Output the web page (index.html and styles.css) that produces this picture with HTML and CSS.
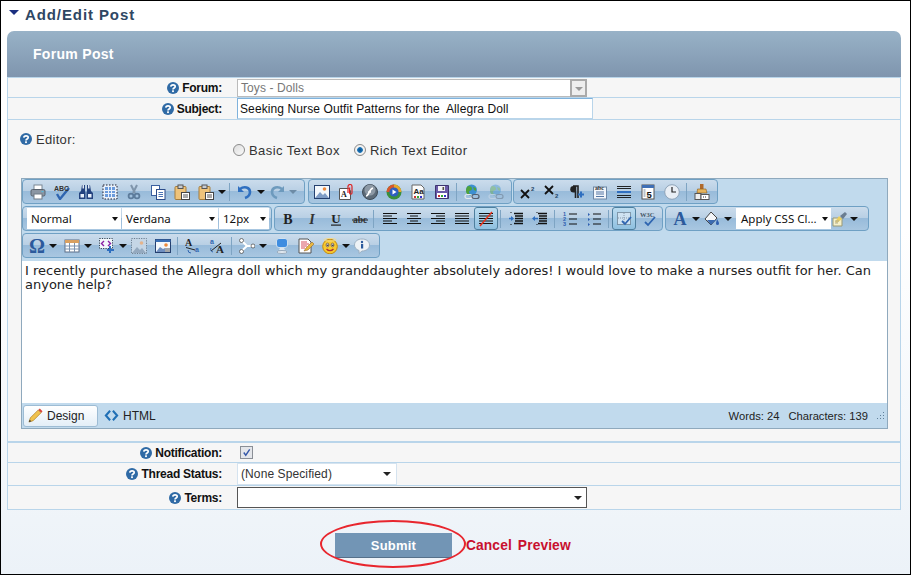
FILE: index.html
```html
<!DOCTYPE html>
<html lang="en">
<head>
    <meta charset="utf-8">
    <title>Add/Edit Post</title>
    <link rel="stylesheet" href="styles.css">
</head>
<body>
    <svg class="icon-defs" xmlns="http://www.w3.org/2000/svg">
        <symbol id="help" viewBox="0 0 12 12"><circle cx="6" cy="6" r="6" fill="#2f6aa5"/><path d="M3.800 4.600C4 2.400 8.200 2.400 8.200 4.500 8.200 6 6 5.900 6 7.400" fill="none" stroke="#fff" stroke-width="1.700"/><rect x="5.100" y="8.300" width="1.800" height="1.800" fill="#fff"/></symbol>
        <symbol id="print" viewBox="0 0 16 16"><rect x="4" y="1" width="8" height="5" fill="#fff" stroke="#7b8794"/><rect x="1" y="5.500" width="14" height="6.500" rx="1.500" fill="#8b96a3" stroke="#59636e"/><rect x="4" y="10" width="8" height="5" fill="#fff" stroke="#6f7a86"/><rect x="11.500" y="7" width="2" height="1.200" fill="#5bd"/></symbol>
        <symbol id="spell" viewBox="0 0 16 16"><path d="M3 10l3 5 9-11" fill="none" stroke="#2f65b0" stroke-width="2.400"/></symbol>
        <symbol id="find" viewBox="0 0 16 16"><path d="M4 1h3v6l.5 1.500V15H1V9l2-2zM9 1h3l1 6 2 2v6H8.500V8.500L9 7z" fill="#24437f"/><rect x="2.500" y="10" width="3.500" height="3.500" fill="#e8f0fa"/><rect x="10" y="10" width="3.500" height="3.500" fill="#e8f0fa"/><rect x="4.500" y="1" width="1.500" height="3.500" fill="#dfe8f4"/><rect x="10" y="1" width="1.500" height="3.500" fill="#dfe8f4"/></symbol>
        <symbol id="selall" viewBox="0 0 16 16"><rect x="1" y="1" width="14" height="14" fill="#e9f1fb" stroke="#223" stroke-dasharray="1.500 1.500"/><rect x="3" y="3" width="10" height="10" fill="#6b9bdc"/><path d="M3 6.500h10M3 9.500h10M6.500 3v10M9.500 3v10" stroke="#e8f1fc" stroke-width="1"/></symbol>
        <symbol id="cut" viewBox="0 0 16 16"><path d="M5 1l4 8M11 1L7 9" stroke="#7f95ab" stroke-width="2" fill="none"/><circle cx="5" cy="12" r="2.400" fill="none" stroke="#5d7c9c" stroke-width="1.800"/><circle cx="11" cy="12" r="2.400" fill="none" stroke="#5d7c9c" stroke-width="1.800"/></symbol>
        <symbol id="copy" viewBox="0 0 16 16"><rect x="1.500" y="1.500" width="8" height="10" fill="#fff" stroke="#3a5fa0"/><rect x="6.500" y="5.500" width="8.500" height="10" fill="#fff" stroke="#2c4c8a"/><path d="M8.500 8.500h4.500M8.500 10.500h4.500M8.500 12.500h4.500" stroke="#4a73b5"/></symbol>
        <symbol id="paste" viewBox="0 0 16 16"><rect x="1" y="2.500" width="11" height="13" rx="1" fill="#eec37b" stroke="#a57c3c"/><rect x="4" y="1" width="5" height="3.500" fill="#c8ccd2" stroke="#555"/><rect x="7.500" y="8.500" width="8" height="7" fill="#fff" stroke="#444"/><path d="M9 11h5M9 13h5" stroke="#555"/></symbol>
        <symbol id="undo" viewBox="0 0 16 16"><path d="M3 5c4-3 10-2 10 3 0 3-2 5-5 6" fill="none" stroke="#2f6fc0" stroke-width="2.600"/><path d="M1 2v6h6z" fill="#2f6fc0"/></symbol>
        <symbol id="redo" viewBox="0 0 16 16"><path d="M13 5C9 2 3 3 3 8c0 3 2 5 5 6" fill="none" stroke="#6d9abd" stroke-width="2.600"/><path d="M15 2v6H9z" fill="#6d9abd"/></symbol>
        <symbol id="image" viewBox="0 0 16 16"><rect x=".5" y="1.500" width="15" height="13" fill="#f4f8fc" stroke="#25406f"/><circle cx="10.500" cy="5" r="1.800" fill="#ee8a3c"/><path d="M1 14l5-6 3 3 2-2 4 5z" fill="#7e9cc6"/></symbol>
        <symbol id="attach" viewBox="0 0 16 16"><path d="M1.500 4.500h9l2 2v9h-11z" fill="#fff" stroke="#555"/><path d="M10 9V2.500a2 2 0 0 1 4 0V9a1.200 1.200 0 0 1-2.400 0V3.500" fill="none" stroke="#d22" stroke-width="1.200"/></symbol>
        <symbol id="flash" viewBox="0 0 16 16"><circle cx="8" cy="8" r="7.500" fill="#5d6b78" stroke="#3f4b57"/><circle cx="8" cy="6" r="5.500" fill="#8d99a5"/><path d="M4 12c3 0 3-7 7-8M6 8h3" fill="none" stroke="#fff" stroke-width="1.600"/></symbol>
        <symbol id="media" viewBox="0 0 16 16"><circle cx="8" cy="8" r="7.500" fill="#3a8f3c"/><path d="M8 .5A7.500 7.500 0 0 1 15.500 8H12A4 4 0 0 0 8 4z" fill="#e6a72c"/><path d="M.5 8A7.500 7.500 0 0 1 8 .5V4A4 4 0 0 0 4 8z" fill="#d8562c"/><circle cx="8" cy="8" r="4.600" fill="#2f5fc0"/><path d="M6.500 5.500v5l4-2.500z" fill="#fff"/></symbol>
        <symbol id="template" viewBox="0 0 16 16"><path d="M2 1h9l3 3v11H2z" fill="#fbfbfb" stroke="#666"/><rect x="4" y="12" width="2" height="2" fill="#c33"/><rect x="7" y="12" width="2" height="2" fill="#3a3"/><rect x="10" y="12" width="2" height="2" fill="#33c"/></symbol>
        <symbol id="save" viewBox="0 0 16 16"><path d="M1.500 1.500h13v13h-13z" fill="#6a5aa8" stroke="#3d3470"/><rect x="4" y="2" width="7" height="5" fill="#f3f3f8"/><rect x="8.500" y="3" width="1.600" height="3" fill="#554"/><rect x="3" y="9" width="10" height="5" fill="#fff"/><rect x="4" y="11" width="2" height="2" fill="#c33"/><rect x="7" y="11" width="2" height="2" fill="#3a3"/><rect x="10" y="11" width="2" height="2" fill="#33c"/></symbol>
        <symbol id="link" viewBox="0 0 16 16"><circle cx="7.500" cy="6" r="5.500" fill="#3d8fd0"/><path d="M4 2c3 0 4 1 4 3s-3 1-3 3 2 2 3 3c-3 1-6-1-6-4s1-4 2-5zM9 3l3 1 0 3-2-1z" fill="#4fa33c"/><rect x="1" y="10.500" width="7" height="4" rx="2" fill="none" stroke="#e4e8ee" stroke-width="1.200"/><rect x="8" y="10.500" width="7" height="4" rx="2" fill="none" stroke="#555f6e" stroke-width="1.200"/></symbol>
        <symbol id="sup" viewBox="0 0 16 16"><path d="M1 6l8 8M9 6l-8 8" stroke="#111" stroke-width="1.800"/></symbol>
        <symbol id="sub" viewBox="0 0 16 16"><path d="M1 2l8 8M9 2l-8 8" stroke="#111" stroke-width="1.800"/></symbol>
        <symbol id="para" viewBox="0 0 16 16"><path d="M5 2h5v12M7.500 2v12" fill="none" stroke="#222" stroke-width="1.600"/><path d="M5.500 2a3 3 0 0 0 0 6.500h2V2z" fill="#222"/><path d="M10 10.500h6M13 7.500v6" stroke="#2f6fc0" stroke-width="2"/></symbol>
        <symbol id="abcnote" viewBox="0 0 16 16"><rect x="1.500" y="3" width="13" height="12" fill="#f2f6fb" stroke="#6d87a6"/><path d="M4 8h8M4 10h8M4 12.500h8" stroke="#5577a5"/></symbol>
        <symbol id="hr" viewBox="0 0 16 16"><path d="M1 2.500h14M1 4.500h14M1 11.500h14M1 13.500h14" stroke="#111" stroke-width=".9"/><rect x="1" y="7" width="14" height="2" fill="#2f6fc0"/></symbol>
        <symbol id="five" viewBox="0 0 16 16"><rect x="2" y="1" width="12" height="14" fill="#fff" stroke="#555"/><rect x="2" y="1" width="12" height="3" fill="#3f6fb5"/><path d="M3.500 6h2M3.500 8h2M3.500 10h2M3.500 12h2" stroke="#789"/></symbol>
        <symbol id="clock" viewBox="0 0 16 16"><circle cx="8" cy="8" r="7.300" fill="#e8eef5" stroke="#8ea3b8"/><path d="M8 3v5h4" fill="none" stroke="#222" stroke-width="1.200"/></symbol>
        <symbol id="style" viewBox="0 0 16 16"><rect x="6" y="0" width="3.500" height="5" fill="#b06a2c"/><path d="M3.500 5h8.500l1 4H3z" fill="#e6b45c" stroke="#8a5a20" stroke-width=".6"/><rect x="1" y="9.500" width="6" height="6" fill="#eee" stroke="#555"/><rect x="7" y="10.500" width="8" height="5" fill="#fff" stroke="#555"/><path d="M9 13h4" stroke="#333" stroke-dasharray="1 1"/></symbol>
        <symbol id="al" viewBox="0 0 16 16"><path d="M1 2.500h14M1 5h9M1 7.500h14M1 10h9M1 12.500h14" stroke="#111" stroke-width="1.200"/></symbol>
        <symbol id="ac" viewBox="0 0 16 16"><path d="M1 2.500h14M4 5h8M1 7.500h14M4 10h8M1 12.500h14" stroke="#111" stroke-width="1.200"/></symbol>
        <symbol id="ar" viewBox="0 0 16 16"><path d="M1 2.500h14M6 5h9M1 7.500h14M6 10h9M1 12.500h14" stroke="#111" stroke-width="1.200"/></symbol>
        <symbol id="aj" viewBox="0 0 16 16"><path d="M1 2.500h14M1 5h14M1 7.500h14M1 10h14M1 12.500h14" stroke="#111" stroke-width="1.200"/></symbol>
        <symbol id="nocolor" viewBox="0 0 16 16"><path d="M1 2.500h14M1 5h14M1 7.500h14M1 10h14M1 12.500h14" stroke="#111" stroke-width="1.200"/><path d="M2 15L14 1" stroke="#e8331c" stroke-width="1.500"/></symbol>
        <symbol id="indent" viewBox="0 0 16 16"><path d="M6 2.500h9M7 5h8M7 7.500h8M7 10h8M6 12.500h9" stroke="#111" stroke-width="1.300"/><path d="M1 7.500h4" stroke="#2f6fc0" stroke-width="1.500"/><path d="M6 7.500L3 5v5z" fill="#2f6fc0"/><path d="M3 1v1M3 13v2" stroke="#111" stroke-dasharray="1 1"/></symbol>
        <symbol id="outdent" viewBox="0 0 16 16"><path d="M6 2.500h9M7 5h8M7 7.500h8M7 10h8M6 12.500h9" stroke="#111" stroke-width="1.300"/><path d="M2 7.500h4" stroke="#2f6fc0" stroke-width="1.500"/><path d="M0 7.500L3 5v5z" fill="#2f6fc0"/><path d="M5 1v1M5 13v2" stroke="#111" stroke-dasharray="1 1"/></symbol>
        <symbol id="ol" viewBox="0 0 16 16"><path d="M7 3h8M7 8h8M7 13h8" stroke="#111" stroke-width="1.200"/></symbol>
        <symbol id="ul" viewBox="0 0 16 16"><path d="M7 3h8M7 8h8M7 13h8" stroke="#111" stroke-width="1.200"/><path d="M2 2l2 1.500L2 5zM2 7l2 1.500L2 10zM2 12l2 1.500L2 15z" fill="#2f5fb0"/></symbol>
        <symbol id="guides" viewBox="0 0 16 16"><rect x="1.500" y="1.500" width="13" height="12" fill="#cfe3f2" stroke="#456" stroke-dasharray="1 1"/><path d="M8 2v11M2 7h12" stroke="#89a" stroke-dasharray="1 1"/><path d="M6 10l3 3 6-7" fill="none" stroke="#2f65b0" stroke-width="1.800"/></symbol>
        <symbol id="w3ccheck" viewBox="0 0 16 16"><path d="M5 11l3 3 7-8" fill="none" stroke="#2f65b0" stroke-width="1.800"/></symbol>
        <symbol id="bucket" viewBox="0 0 16 16"><path d="M7 1L1 8l6 6 6-7z" fill="#f4f6f9" stroke="#444"/><path d="M3 9h9l-5 5z" fill="#3c6bb0"/><path d="M13 8c1 2 2 3 2 4.500a1.500 1.500 0 0 1-3 0c0-1 .5-2 1-4.500z" fill="#2f5fb0"/></symbol>
        <symbol id="cleaner" viewBox="0 0 16 16"><path d="M1 7h9v8H1z" fill="#f6f0c8" stroke="#997"/><path d="M3 11l4-6 3 3-5 4z" fill="#ecd060"/><path d="M8 5l5-4 2 2-4 5z" fill="#6a7d91"/><path d="M3 10h4M3 12h3" stroke="#aa9"/></symbol>
        <symbol id="table" viewBox="0 0 16 16"><rect x="1" y="2" width="14" height="12" fill="#fff" stroke="#5c6f88"/><rect x="1" y="2" width="14" height="3" fill="#d9a060"/><path d="M1 8h14M1 11h14M5.500 5v9M10.500 5v9" stroke="#7c92ad"/></symbol>
        <symbol id="snippet" viewBox="0 0 16 16"><rect x=".5" y=".5" width="13" height="10" fill="#f4f8fc" stroke="#345" stroke-dasharray="1.200 1.200"/><path d="M5 3L2.500 5.500 5 8M9 3l2.500 2.500L9 8" fill="none" stroke="#8a1fa5" stroke-width="1.400"/><path d="M11 15v-7M8 12h7" stroke="#2f6fc0" stroke-width="2"/></symbol>
        <symbol id="imgmap" viewBox="0 0 16 16"><rect x=".5" y=".5" width="15" height="15" fill="#c5d6e6" stroke="#6b7e90" stroke-dasharray="1.200 1.200"/><circle cx="10.500" cy="5" r="1.800" fill="#e4b48c"/><path d="M1 15l5-6 3 3 2-2 4 5z" fill="#94a9bf"/></symbol>
        <symbol id="imgprop" viewBox="0 0 16 16"><rect x=".5" y="1.500" width="15" height="13" fill="#f4f8fc" stroke="#25406f"/><rect x=".5" y="1.500" width="15" height="2.500" fill="#3a6fb5"/><circle cx="11" cy="7" r="1.800" fill="#ee8a3c"/><path d="M1 14l4-5 3 2 2-1v4z" fill="#6f8fc0"/><path d="M10 11h5M10 13h5" stroke="#555"/></symbol>
        <symbol id="ltrmark" viewBox="0 0 16 16"><path d="M1 9.500L10 12" stroke="#222"/><path d="M3 12a3 3 0 0 0 3 3" fill="none" stroke="#2f65b0"/></symbol>
        <symbol id="rtlmark" viewBox="0 0 16 16"><path d="M2 13L12 5" stroke="#222"/><path d="M2 10a3 3 0 0 0 2 4" fill="none" stroke="#2f65b0"/></symbol>
        <symbol id="nodes" viewBox="0 0 16 16"><path d="M2.500 2.500L8 8l-6 5.500M8 8h6" stroke="#fff" stroke-width="2" fill="none"/><circle cx="2.500" cy="2.500" r="2" fill="#fff" stroke="#444" stroke-width=".7"/><circle cx="2.500" cy="13.500" r="2" fill="#fff" stroke="#444" stroke-width=".7"/><circle cx="14" cy="8" r="2" fill="#fff" stroke="#444" stroke-width=".7"/></symbol>
        <symbol id="monitor" viewBox="0 0 16 16"><rect x="2.500" y="0.500" width="11" height="9" rx="2.500" fill="#3f8de0" stroke="#cfe0ee"/><path d="M6 10h4l1 2H5z" fill="#dde6ee"/><ellipse cx="8" cy="14" rx="5" ry="1.500" fill="#e4ebf2" stroke="#9ab"/></symbol>
        <symbol id="edit" viewBox="0 0 16 16"><path d="M1 1h9l3 3v11H1z" fill="#fff" stroke="#555"/><path d="M3 4h6M3 6h8M3 8h6M3 10h4" stroke="#c23" stroke-width=".8"/><path d="M6 13l2-3 6-6 2 2-6 6z" fill="#e8b840" stroke="#8a5a20" stroke-width=".5"/></symbol>
        <symbol id="smile" viewBox="0 0 16 16"><circle cx="8" cy="8.500" r="7.300" fill="#f7c92e" stroke="#c38a12"/><ellipse cx="8" cy="1.800" rx="6" ry="1.300" fill="none" stroke="#f3d98a"/><ellipse cx="5.500" cy="7" rx="1.400" ry="1.800" fill="#fff" stroke="#765"/><ellipse cx="10.500" cy="7" rx="1.400" ry="1.800" fill="#fff" stroke="#765"/><circle cx="5.700" cy="7.300" r=".7" fill="#222"/><circle cx="10.700" cy="7.300" r=".7" fill="#222"/><path d="M4.500 11c2 2.200 5 2.200 7 0" fill="none" stroke="#a33" stroke-width="1.200"/></symbol>
        <symbol id="info" viewBox="0 0 16 16"><path d="M8 1c4 0 7.500 2.200 7.500 6S12 13 8 13l-3 2.500V12.500C2 11.500.500 9.500.500 7 .500 3.200 4 1 8 1z" fill="#eef2f6" stroke="#9db0c2"/><circle cx="8" cy="4" r="1.200" fill="#2c5a9c"/><rect x="7" y="6" width="2.200" height="4.500" fill="#2c5a9c"/></symbol>
        <symbol id="pencil" viewBox="0 0 16 16"><path d="M1 15l1.500-4.500L11 2l3 3-8.500 8.500z" fill="#f0c24e" stroke="#a9781f" stroke-width=".7"/><path d="M11 2l1.500-1.500 3 3L14 5z" fill="#d9483b"/><path d="M1 15l.8-2.600 1.800 1.800z" fill="#333"/></symbol>
        <symbol id="code" viewBox="0 0 16 16"><path d="M6.500 3L2 8l4.500 5M9.500 3L14 8l-4.500 5" fill="none" stroke="#1f6fb5" stroke-width="2.200"/></symbol>
        <symbol id="check" viewBox="0 0 12 12"><path d="M3 6l2.200 3L9.500 2.500" fill="none" stroke="#3457a8" stroke-width="1.500"/></symbol>
    </svg>

    <div class="page">
        <h1 class="page-title"><span class="caret"></span>Add/Edit Post</h1>

        <div class="panel">
            <h2 class="panel-title">Forum Post</h2>
            <div class="panel-body">
                <div class="row row-forum">
                    <label class="row-label"><svg class="help"><use href="#help"/></svg>Forum:</label>
                    <div class="picker picker-disabled">Toys - Dolls<span class="picker-btn"></span></div>
                </div>
                <div class="row row-subject">
                    <label class="row-label"><svg class="help"><use href="#help"/></svg>Subject:</label>
                    <div class="subject-box">Seeking Nurse Outfit Patterns for the  Allegra Doll</div>
                </div>

                <div class="editor-field">
                    <div class="editor-head">
                        <label class="editor-label"><svg class="help"><use href="#help"/></svg>Editor:</label>
                        <div class="editor-mode">
                            <span class="radio"></span><span class="radio-text">Basic Text Box</span>
                            <span class="radio radio-on"></span><span class="radio-text">Rich Text Editor</span>
                        </div>
                    </div>

                    <div class="editor">
                        <div class="toolbar">
                            <div class="tool-group group-a">
                                <svg class="ic"><use href="#print"/></svg>
                                <svg class="ic" viewBox="0 0 16 16"><use href="#spell"/><text class="g-sans" x="0" y="6.500" font-size="7" fill="#333">ABC</text></svg>
                                <svg class="ic"><use href="#find"/></svg>
                                <svg class="ic"><use href="#selall"/></svg>
                                <svg class="ic"><use href="#cut"/></svg>
                                <svg class="ic"><use href="#copy"/></svg>
                                <svg class="ic"><use href="#paste"/></svg>
                                <svg class="ic"><use href="#paste"/></svg>
                                <span class="drop"></span>
                                <span class="sep sep-wide"></span>
                                <svg class="ic"><use href="#undo"/></svg>
                                <span class="drop"></span>
                                <svg class="ic"><use href="#redo"/></svg>
                                <span class="drop drop-off"></span>
                            </div>
                            <div class="tool-group group-b">
                                <svg class="ic"><use href="#image"/></svg>
                                <svg class="ic" viewBox="0 0 16 16"><use href="#attach"/><text class="g-serif" x="3" y="13" font-size="8" fill="#222">A</text></svg>
                                <svg class="ic"><use href="#flash"/></svg>
                                <svg class="ic"><use href="#media"/></svg>
                                <svg class="ic" viewBox="0 0 16 16"><use href="#template"/><text class="g-sans" x="3.500" y="10" font-size="8" fill="#222">Aa</text></svg>
                                <svg class="ic"><use href="#save"/></svg>
                                <span class="sep"></span>
                                <svg class="ic"><use href="#link"/></svg>
                                <svg class="ic ic-off"><use href="#link"/></svg>
                            </div>
                            <div class="tool-group group-c">
                                <svg class="ic" viewBox="0 0 16 16"><use href="#sup"/><text class="g-sans" x="11" y="7" font-size="6" fill="#246">2</text></svg>
                                <svg class="ic" viewBox="0 0 16 16"><use href="#sub"/><text class="g-sans" x="11" y="14" font-size="6" fill="#246">2</text></svg>
                                <svg class="ic"><use href="#para"/></svg>
                                <svg class="ic" viewBox="0 0 16 16"><use href="#abcnote"/><text class="g-serif" x="3" y="5.500" font-size="6" fill="#333">abc</text></svg>
                                <svg class="ic"><use href="#hr"/></svg>
                                <svg class="ic" viewBox="0 0 16 16"><use href="#five"/><text class="g-sans" x="6.500" y="13.500" font-size="9.500" fill="#111">5</text></svg>
                                <svg class="ic"><use href="#clock"/></svg>
                                <span class="sep"></span>
                                <svg class="ic"><use href="#style"/></svg>
                            </div>
                        </div>

                        <div class="toolbar">
                            <div class="tool-group group-d">
                                <div class="combo combo-format">Normal</div>
                                <div class="combo combo-font">Verdana</div>
                                <div class="combo combo-size">12px</div>
                            </div>
                            <div class="tool-group group-e">
                                <svg class="ic" viewBox="0 0 16 16"><text class="g-serif" x="8" y="13" text-anchor="middle" font-size="14" fill="#222">B</text></svg>
                                <svg class="ic" viewBox="0 0 16 16"><text class="g-serif g-italic" x="8" y="13" text-anchor="middle" font-size="14" fill="#333">I</text></svg>
                                <svg class="ic" viewBox="0 0 16 16"><text class="g-serif" x="8" y="12" text-anchor="middle" font-size="13" fill="#222">U</text><rect x="3" y="13.500" width="10" height="1.200" fill="#222"/></svg>
                                <svg class="ic" viewBox="0 0 16 16"><text class="g-serif" x="8" y="12" text-anchor="middle" font-size="9.500" fill="#333">abc</text><rect x="0" y="8.500" width="16" height="1" fill="#222"/></svg>
                                <span class="sep sep-left"></span>
                                <svg class="ic"><use href="#al"/></svg>
                                <svg class="ic"><use href="#ac"/></svg>
                                <svg class="ic"><use href="#ar"/></svg>
                                <svg class="ic"><use href="#aj"/></svg>
                                <span class="on"><svg class="ic"><use href="#nocolor"/></svg></span>
                                <span class="sep"></span>
                                <svg class="ic"><use href="#indent"/></svg>
                                <svg class="ic"><use href="#outdent"/></svg>
                                <span class="sep"></span>
                                <svg class="ic" viewBox="0 0 16 16"><use href="#ol"/><text class="g-sans" x="1" y="5" font-size="5.500" fill="#2f5fb0">1</text><text class="g-sans" x="1" y="10" font-size="5.500" fill="#2f5fb0">2</text><text class="g-sans" x="1" y="15" font-size="5.500" fill="#2f5fb0">3</text></svg>
                                <svg class="ic"><use href="#ul"/></svg>
                                <span class="sep"></span>
                                <span class="on"><svg class="ic"><use href="#guides"/></svg></span>
                                <svg class="ic" viewBox="0 0 16 16"><use href="#w3ccheck"/><text class="g-serif" x="0" y="6" font-size="6.500" fill="#456">W3C</text></svg>
                            </div>
                            <div class="tool-group group-f">
                                <span class="letter-ic letter-a">A</span>
                                <span class="drop"></span>
                                <svg class="ic"><use href="#bucket"/></svg>
                                <span class="drop"></span>
                                <div class="combo combo-css">Apply CSS Cl...</div>
                                <svg class="ic ic-tight"><use href="#cleaner"/></svg>
                                <span class="drop"></span>
                            </div>
                        </div>

                        <div class="toolbar">
                            <div class="tool-group group-g">
                                <span class="letter-ic letter-omega">Ω</span>
                                <span class="drop drop-gap"></span>
                                <svg class="ic"><use href="#table"/></svg>
                                <span class="drop drop-gap"></span>
                                <svg class="ic"><use href="#snippet"/></svg>
                                <span class="drop"></span>
                                <svg class="ic"><use href="#imgmap"/></svg>
                                <svg class="ic"><use href="#imgprop"/></svg>
                                <span class="sep"></span>
                                <svg class="ic" viewBox="0 0 16 16"><use href="#ltrmark"/><text class="g-serif" x="0" y="8" font-size="10" fill="#222">A</text><text class="g-sans" x="10" y="14" font-size="7" fill="#2f65b0">a</text></svg>
                                <svg class="ic" viewBox="0 0 16 16"><use href="#rtlmark"/><text class="g-sans" x="1" y="6" font-size="7" fill="#2f65b0">a</text><text class="g-serif" x="7" y="15" font-size="11" fill="#222">A</text></svg>
                                <span class="sep"></span>
                                <svg class="ic"><use href="#nodes"/></svg>
                                <span class="drop drop-gap"></span>
                                <svg class="ic"><use href="#monitor"/></svg>
                                <svg class="ic"><use href="#edit"/></svg>
                                <svg class="ic"><use href="#smile"/></svg>
                                <span class="drop"></span>
                                <svg class="ic"><use href="#info"/></svg>
                            </div>
                        </div>

                        <div class="editor-body">I recently purchased the Allegra doll which my granddaughter absolutely adores! I would love to make a nurses outfit for her. Can anyone help?</div>

                        <div class="editor-foot">
                            <span class="tab tab-active"><svg class="tab-icon"><use href="#pencil"/></svg>Design</span>
                            <span class="tab"><svg class="tab-icon"><use href="#code"/></svg>HTML</span>
                            <span class="counts">Words: 24<span class="count-chars">Characters: 139</span></span>
                            <svg class="grip" viewBox="0 0 10 10"><path d="M8 1h1v1H8zM5 4h1v1H5zM8 4h1v1H8zM2 7h1v1H2zM5 7h1v1H5zM8 7h1v1H8z" fill="#5f7f99"/></svg>
                        </div>
                    </div>
                </div>

                <div class="row row-notify">
                    <label class="row-label"><svg class="help"><use href="#help"/></svg>Notification:</label>
                    <span class="checkbox"><svg class="check"><use href="#check"/></svg></span>
                </div>
                <div class="row row-status">
                    <label class="row-label"><svg class="help"><use href="#help"/></svg>Thread Status:</label>
                    <div class="picker picker-status">(None Specified)<span class="arrow"></span></div>
                </div>
                <div class="row row-terms">
                    <label class="row-label"><svg class="help"><use href="#help"/></svg>Terms:</label>
                    <div class="picker picker-terms"><span class="arrow"></span></div>
                </div>
            </div>
        </div>

        <div class="actions">
            <span class="submit-wrap">
                <button class="submit" type="button">Submit</button>
                <span class="circle-mark"></span>
            </span>
            <a class="action-link" href="#">Cancel</a>
            <a class="action-link" href="#">Preview</a>
        </div>
    </div>
</body>
</html>
```

FILE: styles.css
```css
* {
    box-sizing: border-box;
}

body {
    margin: 0;
    font-family: 'Liberation Sans', Arial, sans-serif;
    color: #222;
}

.icon-defs {
    position: absolute;
    width: 0;
    height: 0;
}

.page {
    width: 911px;
    height: 575px;
    border: 1px solid #000;
    padding: 0 9px 0 6px;
    background: linear-gradient(#fff 40%, #ecf2f8 100%);
    overflow: hidden;
}

.page-title {
    display: flex;
    align-items: center;
    height: 30px;
    margin: 0;
    padding: 0 0 4px 2px;
    font-size: 15px;
    font-weight: bold;
    letter-spacing: 0.9px;
    color: #2f4763;
}

.caret {
    width: 0;
    height: 0;
    margin-right: 6px;
    margin-bottom: 3px;
    border-left: 5px solid transparent;
    border-right: 5px solid transparent;
    border-top: 5px solid #1b2f80;
}

.panel-title {
    height: 46px;
    margin: 0;
    padding-left: 26px;
    font-size: 14px;
    font-weight: bold;
    line-height: 46px;
    letter-spacing: 0.3px;
    color: #fff;
    background: linear-gradient(#98b2c7, #7f95ae);
    border-radius: 7px 7px 0 0;
}

.panel-body {
    border: 1px solid #b9d5ea;
    background: #f6f6f6;
}

.row {
    display: grid;
    grid-template-columns: 229px 1fr;
    align-items: center;
    border-bottom: 1px solid #b9d5ea;
}

.row-forum { height: 20px; }
.row-subject { height: 22px; }
.row-notify { height: 22px; border-top: 2px solid #b9d5ea; }
.row-status { height: 23px; }
.row-terms { height: 23px; border-bottom: 0; }

.row-label {
    display: flex;
    justify-content: flex-end;
    align-items: center;
    padding-right: 15px;
    font-size: 12px;
    font-weight: bold;
    letter-spacing: -0.25px;
    color: #111;
}

.help {
    width: 12px;
    height: 12px;
    margin-right: 3px;
    flex: none;
}

.picker {
    position: relative;
    padding-left: 3px;
    font-size: 12px;
    letter-spacing: 0.1px;
    background: #fff;
    color: #333;
}

.picker-disabled {
    width: 350px;
    height: 18px;
    line-height: 17px;
    border: 1px solid #bbb;
    border-right: 0;
    color: #777;
}

.picker-btn {
    position: absolute;
    top: -1px;
    right: 0;
    width: 17px;
    height: 18px;
    border: 2px solid #aaa;
    background: #eee;
}

.picker-btn::after {
    content: "";
    position: absolute;
    top: 6px;
    left: 3px;
    border-left: 4px solid transparent;
    border-right: 4px solid transparent;
    border-top: 4px solid #999;
}

.subject-box {
    width: 356px;
    height: 21px;
    padding-left: 2px;
    font-size: 12px;
    line-height: 20px;
    letter-spacing: 0.1px;
    white-space: pre;
    color: #111;
    background: #fff;
    border: 1px solid #b9d5ea;
    border-top-color: #7fb2dc;
    border-left-color: #7fb2dc;
}

.picker-status {
    width: 160px;
    height: 22px;
    line-height: 21px;
    border: 1px solid #d5e3ef;
}

.picker-terms {
    width: 350px;
    height: 21px;
    border: 1px solid #555;
}

.arrow {
    position: absolute;
    top: 8px;
    right: 4px;
    border-left: 4px solid transparent;
    border-right: 4px solid transparent;
    border-top: 4px solid #222;
}

.picker-status .arrow {
    right: 5px;
}

.checkbox {
    display: block;
    width: 13px;
    height: 13px;
    margin-left: 3px;
    border: 1px solid #8a8f96;
    background: #e4e6ea;
}

.check {
    display: block;
    width: 11px;
    height: 11px;
}

.editor-field {
    padding: 0 11px 12px 13px;
}

.editor-head {
    display: grid;
    grid-template-columns: 212px 1fr;
    height: 58px;
    padding-top: 11px;
}

.editor-label {
    display: flex;
    align-items: center;
    align-self: start;
    height: 16px;
    font-size: 13px;
    letter-spacing: 0.3px;
    color: #333;
}

.editor-label .help {
    margin-left: -1px;
    margin-right: 4px;
}

.editor-mode {
    display: flex;
    align-items: center;
    align-self: start;
    height: 16px;
    margin-top: 11px;
    font-size: 13px;
    letter-spacing: 0.42px;
    color: #333;
}

.radio {
    width: 12px;
    height: 12px;
    margin-right: 4px;
    border-radius: 50%;
    border: 1px solid #8b8b8b;
    background: linear-gradient(135deg, #ddd, #fafafa);
}

.radio-on {
    background: radial-gradient(circle, #0d4f8a 0, #1b74b8 35%, #f2f2f2 45%);
}

.radio-text {
    margin-right: 14px;
}

.editor {
    width: 867px;
    height: 251px;
    border: 1px solid #8fa9bd;
    background: #c1daed;
}

.toolbar {
    display: flex;
    gap: 2px;
    height: 25px;
    margin-bottom: 2px;
}

.tool-group {
    display: flex;
    align-items: center;
    height: 25px;
    border: 1px solid #6fa0c4;
    border-radius: 4px;
    background: linear-gradient(#cbdcec, #b8cfe4 49%, #98bbda 50%, #a9c7e1);
}

.group-a { width: 283px; padding-left: 3px; }
.group-b { width: 204px; padding-left: 1px; margin-left: 1px; }
.group-c { width: 205px; padding-left: 2px; margin-left: -1px; }
.group-d { width: 250px; padding-left: 4px; gap: 1px; }
.group-e { width: 389px; padding-left: 1px; }
.group-f { width: 204px; padding-left: 2px; }
.group-g { width: 358px; padding-left: 2px; }

.ic {
    flex: none;
    width: 16px;
    height: 16px;
    margin: 0 4px;
}

.ic-off {
    opacity: 0.4;
}

.ic-tight {
    margin: 0 2px 0 1px;
}

.g-sans {
    font-family: 'Liberation Sans', Arial, sans-serif;
    font-weight: bold;
}

.g-serif {
    font-family: 'Liberation Serif', 'Times New Roman', serif;
    font-weight: bold;
}

.g-italic {
    font-style: italic;
}

.letter-ic {
    flex: none;
    width: 24px;
    font-family: 'Liberation Serif', 'Times New Roman', serif;
    font-weight: bold;
    line-height: 22px;
    text-align: center;
    color: #2c5a9c;
}

.letter-a {
    font-size: 18px;
}

.letter-omega {
    font-size: 20px;
}

.drop {
    flex: none;
    width: 8px;
    height: 4px;
    border-left: 4px solid transparent;
    border-right: 4px solid transparent;
    border-top: 4px solid #111;
}

.drop-off {
    border-top-color: #6d8ba6;
}

.drop-gap {
    margin-right: 3px;
}

.sep {
    flex: none;
    width: 1px;
    height: 18px;
    margin: 0 3px 0 2px;
    background: #7ea4c3;
}

.sep-wide {
    margin: 0 3px 0 3px;
}

.sep-left {
    margin: 0 4px 0 1px;
}

.on {
    display: flex;
    flex: none;
    align-items: center;
    width: 24px;
    height: 23px;
    border: 1px solid #4f7f9e;
    border-radius: 3px;
    background: linear-gradient(#bcdcf0, #8fc0e0);
}

.on .ic {
    margin: 0 3px;
}

.combo {
    position: relative;
    flex: none;
    height: 21px;
    padding-left: 4px;
    font-family: 'Noto Sans', Verdana, sans-serif;
    font-size: 11.500px;
    line-height: 22px;
    color: #111;
    background: #fff;
}

.combo::after {
    content: "";
    position: absolute;
    top: 9px;
    right: 3px;
    border-left: 3.500px solid transparent;
    border-right: 3.500px solid transparent;
    border-top: 4px solid #111;
}

.combo-format { width: 94px; }
.combo-font { width: 96px; }
.combo-size { width: 50px; }

.combo-css {
    width: 95px;
    margin-left: 4px;
    padding-left: 5px;
}

.editor-body {
    height: 142px;
    margin-top: 3px;
    padding: 3px;
    font-family: 'DejaVu Sans', Verdana, sans-serif;
    font-size: 13px;
    line-height: 14px;
    color: #222;
    background: #fff;
}

.editor-foot {
    display: flex;
    align-items: center;
    height: 25px;
    padding: 0 2px 0 1px;
    font-size: 12px;
}

.tab {
    display: flex;
    align-items: center;
    height: 22px;
    padding-left: 4px;
    color: #222;
}

.tab-active {
    width: 75px;
    margin-right: 2px;
    padding-left: 4px;
    border: 1px solid #9dbcd4;
    border-radius: 3px;
    background: linear-gradient(#fff, #e3eef7);
}

.tab-icon {
    width: 15px;
    height: 15px;
    margin-right: 4px;
}

.counts {
    margin-left: auto;
    padding-top: 1px;
    font-size: 11.200px;
}

.count-chars {
    margin-left: 9px;
}

.grip {
    width: 10px;
    height: 10px;
    margin-left: 7px;
}

.actions {
    display: flex;
    align-items: center;
    margin-top: 23px;
    padding-left: 328px;
}

.submit-wrap {
    position: relative;
    margin-right: 14px;
}

.submit {
    display: block;
    width: 117px;
    height: 25px;
    padding: 0;
    font-family: 'Liberation Sans', Arial, sans-serif;
    font-size: 13px;
    font-weight: bold;
    letter-spacing: 0.2px;
    color: #fff;
    background: #7295b5;
    border: 0;
    border-bottom: 1px solid #55708a;
}

.circle-mark {
    position: absolute;
    top: -13px;
    left: -15px;
    width: 146px;
    height: 48px;
    border: 2px solid #e8262e;
    border-radius: 50%;
}

.action-link {
    margin-right: 6px;
    font-size: 13.800px;
    font-weight: bold;
    letter-spacing: 0.1px;
    text-decoration: none;
    color: #c8102e;
}
```
